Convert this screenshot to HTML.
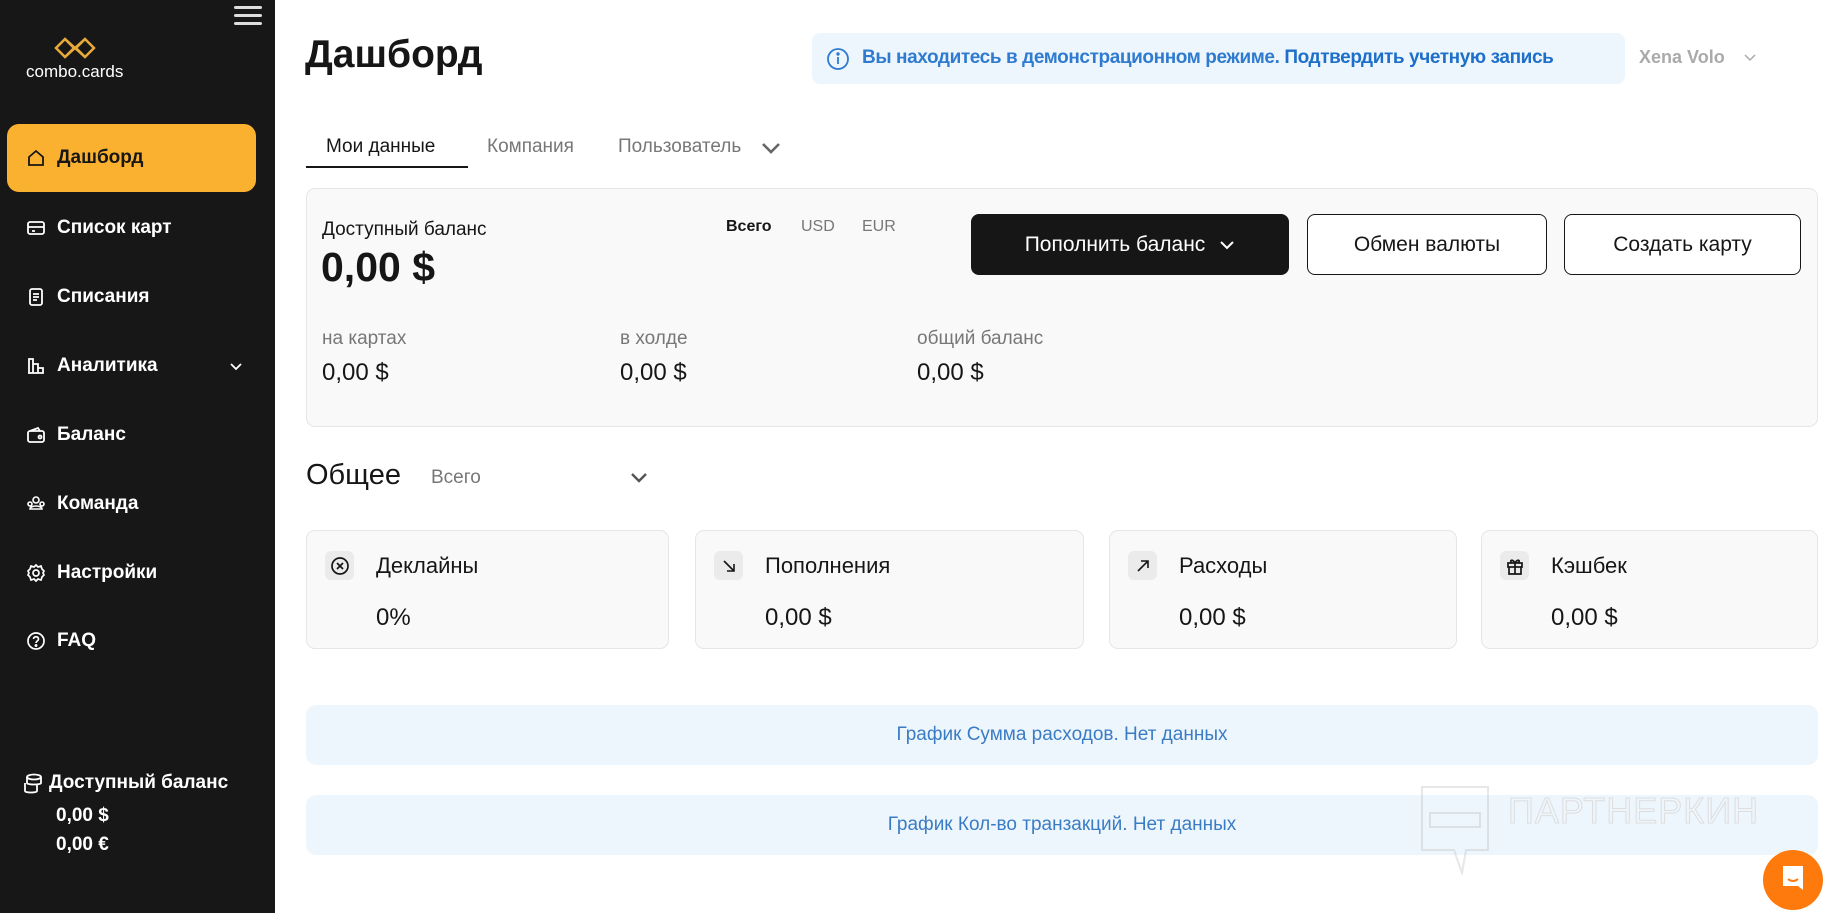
<!DOCTYPE html>
<html><head><meta charset="utf-8"><style>
*{margin:0;padding:0;box-sizing:border-box}
body{width:1833px;height:913px;overflow:hidden;background:#fff;font-family:"Liberation Sans",sans-serif;color:#161616;position:relative}
.abs{position:absolute;white-space:nowrap}
.side{position:absolute;left:0;top:0;width:275px;height:913px;background:#171717}
.nav{position:absolute;left:7px;width:249px;height:68px;display:flex;align-items:center;color:#fff;font-size:19px;font-weight:700}
.nav svg{position:absolute;left:19px}
.nav span{position:absolute;left:50px}
.card{position:absolute;background:#f9f9f9;border:1px solid #e6e6e6;border-radius:9px}
.btn{position:absolute;top:214px;height:61px;border-radius:8px;display:flex;align-items:center;justify-content:center;font-size:21px}
.ib{position:absolute;left:18px;top:20px;width:29px;height:29px;background:#ebebeb;border-radius:6px;display:flex;align-items:center;justify-content:center}
.st{position:absolute;left:69px;top:22px;font-size:22px}
.sv{position:absolute;left:69px;top:73px;font-size:24px}
.chart{position:absolute;left:306px;width:1512px;height:60px;background:#eef6fd;border-radius:10px;color:#3a7cc4;font-size:19px;display:flex;align-items:center;justify-content:center}
</style></head><body>
<div class="side">
 <div class="abs" style="left:234px;top:6px;width:28px;height:3px;background:#ddd;border-radius:2px"></div>
 <div class="abs" style="left:234px;top:14px;width:28px;height:3px;background:#ddd;border-radius:2px"></div>
 <div class="abs" style="left:234px;top:22px;width:28px;height:3px;background:#ddd;border-radius:2px"></div>
 <svg class="abs" style="left:54px;top:37px" width="42" height="22" viewBox="0 0 42 22"><g fill="none" stroke="#e9a93a" stroke-width="2.5"><path d="M11 2 L2 11 L11 20 L20 11 Z"/><path d="M31 2 L22 11 L31 20 L40 11 Z"/><path d="M11 2 L31 20 M11 20 L31 2"/></g></svg>
 <div class="abs" style="left:26px;top:62px;color:#fff;font-size:17px">combo.cards</div>
 <div class="nav" style="top:124px;background:#fbb130;border-radius:12px;color:#161616"><svg width="20" height="20" viewBox="0 0 20 20" fill="none" stroke="#161616" stroke-width="1.8"><path d="M3 9 L10 3 L17 9 V17 H3 Z"/></svg><span>Дашборд</span></div>
 <div class="nav" style="top:194px"><svg width="20" height="20" viewBox="0 0 20 20" fill="none" stroke="#fff" stroke-width="1.8"><rect x="2" y="4" width="16" height="12" rx="2"/><path d="M2 9H18M6 13H9"/></svg><span>Список карт</span></div>
 <div class="nav" style="top:263px"><svg width="20" height="20" viewBox="0 0 20 20" fill="none" stroke="#fff" stroke-width="1.8"><rect x="4" y="2" width="12" height="16" rx="2"/><path d="M7 7H13M7 10H13M7 13H11"/></svg><span>Списания</span></div>
 <div class="nav" style="top:332px"><svg width="20" height="20" viewBox="0 0 20 20" fill="none" stroke="#fff" stroke-width="1.8"><path d="M3 17V3H7V17M7 17V8H12V17M12 17V12H17V17H2"/></svg><span>Аналитика</span><svg style="left:222px" width="14" height="14" viewBox="0 0 14 14" fill="none" stroke="#fff" stroke-width="1.8"><path d="M2 5L7 10L12 5"/></svg></div>
 <div class="nav" style="top:401px"><svg width="20" height="20" viewBox="0 0 20 20" fill="none" stroke="#fff" stroke-width="1.8"><rect x="2" y="6" width="16" height="11" rx="2"/><path d="M4 6L12 3L14 6"/><circle cx="14" cy="12" r="1.5"/></svg><span>Баланс</span></div>
 <div class="nav" style="top:470px"><svg width="20" height="20" viewBox="0 0 20 20" fill="none" stroke="#fff" stroke-width="1.6"><circle cx="10" cy="6" r="3"/><path d="M4 15C4 11 16 11 16 15Z"/><circle cx="4" cy="10" r="2"/><circle cx="16" cy="10" r="2"/></svg><span>Команда</span></div>
 <div class="nav" style="top:539px"><svg width="20" height="20" viewBox="0 0 20 20" fill="none" stroke="#fff" stroke-width="1.7"><circle cx="10" cy="10" r="3"/><path d="M10 2L12 4L15 3L16 6L18 8L17 10L18 12L16 14L15 17L12 16L10 18L8 16L5 17L4 14L2 12L3 10L2 8L4 6L5 3L8 4Z"/></svg><span>Настройки</span></div>
 <div class="nav" style="top:607px"><svg width="20" height="20" viewBox="0 0 20 20" fill="none" stroke="#fff" stroke-width="1.7"><circle cx="10" cy="10" r="8"/><path d="M7.5 8C7.5 5 12.5 5 12.5 8C12.5 10 10 10 10 12"/><circle cx="10" cy="14.5" r=".6" fill="#fff"/></svg><span>FAQ</span></div>
 <svg class="abs" style="left:23px;top:773px" width="20" height="22" viewBox="0 0 20 22" fill="none" stroke="#fff" stroke-width="1.8"><ellipse cx="11" cy="4" rx="7" ry="2.5"/><path d="M4 4V10C4 12 18 12 18 10V4M2 10V18C2 20 14 20 14 18V12"/></svg>
 <div class="abs" style="left:49px;top:772px;color:#fff;font-size:19px;font-weight:700">Доступный баланс</div>
 <div class="abs" style="left:56px;top:805px;color:#fff;font-size:19px;font-weight:700">0,00 $</div>
 <div class="abs" style="left:56px;top:834px;color:#fff;font-size:19px;font-weight:700">0,00 €</div>
</div>

<div class="abs" style="left:305px;top:33px;font-size:39px;font-weight:700">Дашборд</div>
<div class="abs" style="left:812px;top:33px;width:813px;height:51px;background:#eef6fd;border-radius:8px"></div>
<svg class="abs" style="left:826px;top:47px" width="24" height="24" viewBox="0 0 24 24" fill="none" stroke="#2f7bd0" stroke-width="1.8"><circle cx="12" cy="12" r="10"/><path d="M12 10V17"/><circle cx="12" cy="7" r=".8" fill="#2f7bd0"/></svg>
<div class="abs" style="left:862px;top:47px;font-size:19px;font-weight:700;color:#2f7bd0;letter-spacing:-0.4px">Вы находитесь в демонстрационном режиме. <span style="color:#1d6fc9">Подтвердить учетную запись</span></div>
<div class="abs" style="left:1639px;top:47px;font-size:18px;font-weight:700;color:#aaa">Xena Volo</div>
<svg class="abs" style="left:1743px;top:52px" width="14" height="12" viewBox="0 0 14 12" fill="none" stroke="#aaa" stroke-width="1.5"><path d="M2 3L7 8L12 3"/></svg>

<div class="abs" style="left:326px;top:136px;font-size:19px">Мои данные</div>
<div class="abs" style="left:306px;top:166px;width:162px;height:2px;background:#161616"></div>
<div class="abs" style="left:487px;top:136px;font-size:19px;color:#777">Компания</div>
<div class="abs" style="left:618px;top:136px;font-size:19px;color:#777">Пользователь</div>
<svg class="abs" style="left:760px;top:139px" width="22" height="18" viewBox="0 0 22 18" fill="none" stroke="#666" stroke-width="2.6"><path d="M3 5L11 13L19 5"/></svg>

<div class="card" style="left:306px;top:188px;width:1512px;height:239px">
 <div class="abs" style="left:15px;top:30px;font-size:19px">Доступный баланс</div>
 <div class="abs" style="left:14px;top:55px;font-size:41px;font-weight:700">0,00 $</div>
 <div class="abs" style="left:419px;top:29px;font-size:16px;font-weight:700">Всего</div>
 <div class="abs" style="left:494px;top:29px;font-size:16px;color:#777">USD</div>
 <div class="abs" style="left:555px;top:29px;font-size:16px;color:#777">EUR</div>
 <div class="abs" style="left:15px;top:139px;font-size:19px;color:#777">на картах</div>
 <div class="abs" style="left:15px;top:170px;font-size:24px">0,00 $</div>
 <div class="abs" style="left:313px;top:139px;font-size:19px;color:#777">в холде</div>
 <div class="abs" style="left:313px;top:170px;font-size:24px">0,00 $</div>
 <div class="abs" style="left:610px;top:139px;font-size:19px;color:#777">общий баланс</div>
 <div class="abs" style="left:610px;top:170px;font-size:24px">0,00 $</div>
</div>
<div class="btn" style="left:971px;width:318px;background:#161616;color:#fff">Пополнить баланс<svg style="margin-left:14px" width="16" height="12" viewBox="0 0 16 12" fill="none" stroke="#fff" stroke-width="2"><path d="M2 3L8 9L14 3"/></svg></div>
<div class="btn" style="left:1307px;width:240px;background:#fff;border:1.5px solid #161616">Обмен валюты</div>
<div class="btn" style="left:1564px;width:237px;background:#fff;border:1.5px solid #161616">Создать карту</div>

<div class="abs" style="left:306px;top:459px;font-size:29px">Общее</div>
<div class="abs" style="left:431px;top:467px;font-size:19px;color:#777">Всего</div>
<svg class="abs" style="left:629px;top:471px" width="20" height="14" viewBox="0 0 20 14" fill="none" stroke="#555" stroke-width="2.4"><path d="M3 3L10 10L17 3"/></svg>

<div class="card" style="left:306px;top:530px;width:363px;height:119px"><div class="ib"><svg width="22" height="22" viewBox="0 0 22 22" fill="none" stroke="#161616" stroke-width="1.7"><circle cx="11" cy="11" r="8"/><path d="M8 8L14 14M14 8L8 14"/></svg></div><div class="st">Деклайны</div><div class="sv">0%</div></div>
<div class="card" style="left:695px;top:530px;width:389px;height:119px"><div class="ib"><svg width="16" height="16" viewBox="0 0 16 16" fill="none" stroke="#161616" stroke-width="1.6"><path d="M3 3L13 13M13 6V13H6"/></svg></div><div class="st">Пополнения</div><div class="sv">0,00 $</div></div>
<div class="card" style="left:1109px;top:530px;width:348px;height:119px"><div class="ib"><svg width="16" height="16" viewBox="0 0 16 16" fill="none" stroke="#161616" stroke-width="1.6"><path d="M3 13L13 3M6 3H13V10"/></svg></div><div class="st">Расходы</div><div class="sv">0,00 $</div></div>
<div class="card" style="left:1481px;top:530px;width:337px;height:119px"><div class="ib"><svg width="20" height="20" viewBox="0 0 20 20" fill="none" stroke="#161616" stroke-width="1.7"><rect x="3" y="7" width="14" height="4"/><path d="M4 11V18H16V11M10 7V18M10 7C7 2 4 5 7 7M10 7C13 2 16 5 13 7"/></svg></div><div class="st">Кэшбек</div><div class="sv">0,00 $</div></div>

<div class="chart" style="top:705px">График Сумма расходов. Нет данных</div>
<div class="chart" style="top:795px">График Кол-во транзакций. Нет данных</div>

<svg class="abs" style="left:1420px;top:785px;opacity:.35" width="72" height="90" viewBox="0 0 72 90" fill="none" stroke="#bbb" stroke-width="2"><path d="M2 2H68V65H46L42 88L34 65H2Z"/><path d="M10 28H60V42H10Z"/></svg>
<div class="abs" style="left:1508px;top:790px;font-size:36px;color:transparent;-webkit-text-stroke:1px #ddd;letter-spacing:1px">ПАРТНЕРКИН</div>

<div class="abs" style="left:1763px;top:850px;width:60px;height:60px;border-radius:50%;background:#ff7a0d"></div>
<svg class="abs" style="left:1780px;top:864px" width="26" height="30" viewBox="0 0 26 30" fill="#fff"><path d="M3 2H23V26L18 22H3Z"/><path d="M8 15Q13 19 18 15" stroke="#ff7a0d" stroke-width="2" fill="none"/></svg>
</body></html>
